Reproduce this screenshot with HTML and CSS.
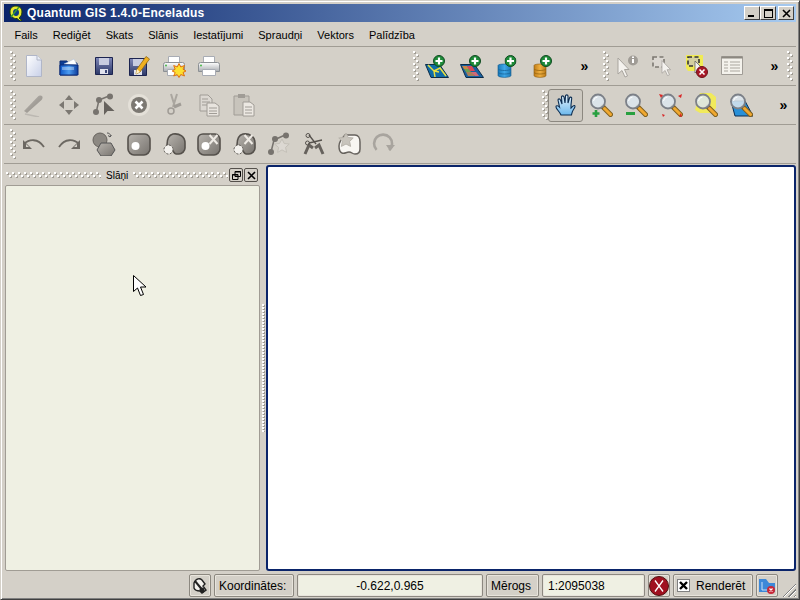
FILE: index.html
```html
<!DOCTYPE html>
<html lang="lv">
<head>
    <meta charset="UTF-8">
    <title>Quantum GIS 1.4.0-Enceladus</title>
    <link rel="stylesheet" href="styles.css">
</head>
<body>

<svg class="sprite" xmlns="http://www.w3.org/2000/svg">
    <defs>
        <linearGradient id="gPage" x1="0" y1="0" x2="1" y2="1"><stop offset="0" stop-color="#fff"/><stop offset="1" stop-color="#c8d0e8"/></linearGradient>
        <linearGradient id="gBlue" x1="0" y1="0" x2="1" y2="0"><stop offset="0" stop-color="#0f58c8"/><stop offset=".5" stop-color="#4c9cf0"/><stop offset="1" stop-color="#0c3c9c"/></linearGradient>
        <linearGradient id="gFloppy" x1="0" y1="0" x2="0" y2="1"><stop offset="0" stop-color="#8088b8"/><stop offset="1" stop-color="#2c3868"/></linearGradient>
        <linearGradient id="gPrinter" x1="0" y1="0" x2="0" y2="1"><stop offset="0" stop-color="#fff"/><stop offset="1" stop-color="#a8acb0"/></linearGradient>
        <linearGradient id="gDb" x1="0" y1="0" x2="1" y2="0"><stop offset="0" stop-color="#1878b8"/><stop offset=".5" stop-color="#40a8e8"/><stop offset="1" stop-color="#1c78b4"/></linearGradient>
        <linearGradient id="gDbO" x1="0" y1="0" x2="1" y2="0"><stop offset="0" stop-color="#c07c18"/><stop offset=".5" stop-color="#f0b040"/><stop offset="1" stop-color="#b87818"/></linearGradient>
        <linearGradient id="gGrey" x1="0" y1="0" x2="1" y2="1"><stop offset="0" stop-color="#b8b4ae"/><stop offset="1" stop-color="#77736e"/></linearGradient>
        <linearGradient id="gGlove" x1="0" y1="0" x2="0" y2="1"><stop offset="0" stop-color="#e8f4fc"/><stop offset="1" stop-color="#6cb8ec"/></linearGradient>
    </defs>

    <symbol id="i-plus" viewBox="0 0 12 12">
        <circle cx="6" cy="6" r="5.5" fill="#1d8a38" stroke="#0f4a20"/>
        <path d="M6 2.5v7M2.5 6h7" stroke="#fff" stroke-width="2.2"/>
    </symbol>
    <symbol id="i-lens" viewBox="0 0 24 24">
        <path d="M14 14l7.5 7.5" stroke="#806020" stroke-width="5" stroke-linecap="round"/>
        <path d="M15.500 15.500l6 6" stroke="#f0a830" stroke-width="3" stroke-linecap="round"/>
        <circle cx="9" cy="8.500" r="7" fill="#dce6ee" fill-opacity=".85" stroke="#7c8088" stroke-width="1.800"/>
        <path d="M4.500 8a4.500 4.500 0 0 1 4-4" stroke="#fff" fill="none"/>
    </symbol>

    <symbol id="i-new" viewBox="0 0 24 24">
        <path d="M4.500 1.500H15L19.500 6v16.500h-15z" fill="url(#gPage)" stroke="#b0b6c8"/>
        <path d="M15 1.500V6h4.500" fill="#e8ecf4" stroke="#b0b6c8"/>
    </symbol>
    <symbol id="i-open" viewBox="0 0 24 24">
        <path d="M3 7h7l1 2h9v12H3z" fill="#0c3c94" stroke="#0a2a70"/>
        <path d="M7 10l10-5 3 6z" fill="#fff" stroke="#a8b8d0" stroke-width=".5"/>
        <path d="M3 11h18v10H3z" fill="url(#gBlue)" stroke="#0a2a78"/>
        <path d="M5 13h12v3H5z" fill="#fff" fill-opacity=".35"/>
    </symbol>
    <symbol id="i-save" viewBox="0 0 24 24">
        <path d="M3.500 3.500h17v17h-17z" fill="url(#gFloppy)" stroke="#1c2450"/>
        <path d="M7 4h10v7H7z" fill="#c8cce0"/>
        <path d="M8 15h8v5H8z" fill="#e0e2ee"/>
        <path d="M13 16h2v3h-2z" fill="#3c4878"/>
    </symbol>
    <symbol id="i-saveas" viewBox="0 0 24 24">
        <path d="M2.500 4.500h17v17h-17z" fill="url(#gFloppy)" stroke="#1c2450"/>
        <path d="M6 5h10v7H6z" fill="#c8cce0"/>
        <path d="M7 16h8v5H7z" fill="#e0e2ee"/>
        <path d="M9 20l1-5L19 2.500l3.500 2.500L13 18z" fill="#f0b020" stroke="#906810" stroke-width=".8"/>
        <path d="M9 20l1-5 3 3z" fill="#fff0c8"/>
    </symbol>
    <symbol id="i-printer" viewBox="0 0 24 24">
        <path d="M6.500 2.500h11v7h-11z" fill="#fff" stroke="#a8acb4"/>
        <path d="M1.500 10.500a2 2 0 0 1 2-2h17a2 2 0 0 1 2 2v7h-21z" fill="url(#gPrinter)" stroke="#8c9094"/>
        <path d="M5.500 15.500h13v6h-13z" fill="#fff" stroke="#a8acb4"/>
        <circle cx="4" cy="11.500" r="1" fill="#48b848"/>
    </symbol>
    <symbol id="i-printnew" viewBox="0 0 24 24">
        <use href="#i-printer"/>
        <path d="M17 9.500l1.800 3.500 3.700-1.500-1.500 3.700 3 1.800-3 1.500 1.500 3.500-3.700-1.500-1.800 3-1.800-3-3.500 1.500 1.500-3.500-3-1.500 3-1.800-1.500-3.700 3.500 1.500z" fill="#fce030" stroke="#e07010"/>
    </symbol>
    <symbol id="i-addvec" viewBox="0 0 24 24">
        <path d="M0.500 10.500h14l9 13H6z" fill="#0f6ca8" stroke="#0c2c48"/>
        <path d="M3 11l6 6 1 6M9 17l6-3 6 8M9 17l5 1" fill="none" stroke="#e8e040" stroke-width="1.500"/>
        <use href="#i-plus" x="8" y="1" width="12" height="12"/>
    </symbol>
    <symbol id="i-addras" viewBox="0 0 24 24">
        <path d="M0.500 10.500h14l9 13H6z" fill="#1860a0" stroke="#0c2c48"/>
        <path d="M2 12h5l2 3H4z" fill="#c88848"/>
        <path d="M4 15h5l2 3H6z" fill="#70a050"/>
        <path d="M7 12h5l3 5-5 0z" fill="#d84858"/>
        <path d="M6 18h6l3 4H8z" fill="#a88058"/>
        <path d="M11 18h5l3 4h-4z" fill="#d06878"/>
        <use href="#i-plus" x="9" y="1" width="12" height="12"/>
    </symbol>
    <symbol id="i-adddb" viewBox="0 0 24 24">
        <path d="M3 11.500c0-2 13-2 13 0v10c0 2.500-13 2.500-13 0z" fill="url(#gDb)" stroke="#10588c" stroke-width=".6"/>
        <path d="M3 15c2 2 11 2 13 0M3 18.500c2 2 11 2 13 0" fill="none" stroke="#1a6498" stroke-width=".8"/>
        <use href="#i-plus" x="9.500" y="1" width="12" height="12"/>
    </symbol>
    <symbol id="i-addwms" viewBox="0 0 24 24">
        <path d="M4 11.500c0-2 12-2 12 0v10c0 2.500-12 2.500-12 0z" fill="url(#gDbO)" stroke="#8c5c10" stroke-width=".6"/>
        <path d="M4 15c2 2 10 2 12 0M4 18.500c2 2 10 2 12 0" fill="none" stroke="#946410" stroke-width=".8"/>
        <use href="#i-plus" x="10" y="1" width="12" height="12"/>
    </symbol>
    <symbol id="i-arrow" viewBox="0 0 24 24">
        <path d="M5 2v16l4-3.500 3 6.500 2.500-1-3-6.500H16z" fill="#f4f2ee" stroke="#a8a49e"/>
    </symbol>
    <symbol id="i-identify" viewBox="0 0 24 24">
        <use href="#i-arrow" x="-2" y="2" width="24" height="24"/>
        <circle cx="18" cy="6.500" r="5" fill="#a09c96"/>
        <path d="M17 5h2v4h-2zM17 2.500h2v1.500h-2z" fill="#fff"/>
    </symbol>
    <symbol id="i-select" viewBox="0 0 24 24">
        <path d="M3 3h11v10H3z" fill="#dcd8d2" stroke="#7c7872" stroke-width="1.600" stroke-dasharray="4 2.500"/>
        <use href="#i-arrow" x="8" y="5" width="19" height="19"/>
    </symbol>
    <symbol id="i-deselect" viewBox="0 0 24 24">
        <path d="M1 1h17v13l-4 3H3l-2-3z" fill="#f4f040" opacity=".85"/>
        <path d="M3 3h11v9H3z" fill="#d4d0a0" stroke="#333" stroke-width="1.600" stroke-dasharray="4 2.500"/>
        <path d="M10 7v12l3-3 2 4 2-1-2-4h3z" fill="#f4f2ee" stroke="#555" stroke-width=".7"/>
        <circle cx="17" cy="18" r="5.500" fill="#a81828" stroke="#701018"/>
        <path d="M14.500 15.500l5 5M19.500 15.500l-5 5" stroke="#fff" stroke-width="1.600"/>
    </symbol>
    <symbol id="i-table" viewBox="0 0 24 24">
        <path d="M1.500 2.500h21v18h-21z" fill="#f4f2ec" stroke="#a09c96"/>
        <path d="M1.500 2.500h21v2h-21z" fill="#8c8880"/>
        <path d="M4 8h4M10 8h10M4 11h4M10 11h10M4 14h4M10 14h10M4 17h4M10 17h10" stroke="#aaa69e"/>
    </symbol>

    <symbol id="i-edit" viewBox="0 0 24 24">
        <path d="M2 18L16 3.500c1-1 3-1.500 4-.5s.5 3-.5 4L5 20z" fill="url(#gGrey)" opacity=".8"/>
        <path d="M3 21l14 3" stroke="#bcb8b2" stroke-width="1.500"/>
    </symbol>
    <symbol id="i-move" viewBox="0 0 24 24">
        <path d="M12 2l4 5H8zM12 22l-4-5h8zM2 12l5-4v8zM22 12l-5 4V8z" fill="#7c7872"/>
    </symbol>
    <symbol id="i-nodes" viewBox="0 0 24 24">
        <path d="M7 7l-3 13 M7 7l10-4" stroke="#77736e" stroke-width="1.500"/>
        <circle cx="7" cy="7" r="3" fill="#77736e"/>
        <circle cx="18" cy="3.500" r="3" fill="#77736e"/>
        <circle cx="4" cy="19" r="3" fill="#77736e"/>
        <path d="M12 8v14l3.500-4 7 0z" fill="#66625d"/>
    </symbol>
    <symbol id="i-delete" viewBox="0 0 24 24">
        <circle cx="12" cy="12" r="11" fill="#e4e0d8"/>
        <circle cx="12" cy="12" r="8" fill="#7c7872"/>
        <path d="M8.500 8.500l7 7M15.500 8.500l-7 7" stroke="#fff" stroke-width="2.600"/>
    </symbol>
    <symbol id="i-cut" viewBox="0 0 24 24">
        <path d="M9 1l4 13M15 1l-4 13" stroke="#aaa69f" stroke-width="2"/>
        <circle cx="9" cy="18" r="3" fill="none" stroke="#a09c96" stroke-width="1.500"/>
        <path d="M12 14l7-3" stroke="#a09c96" stroke-width="3"/>
    </symbol>
    <symbol id="i-copy" viewBox="0 0 24 24">
        <path d="M3 2h8l4 4v12H3z" fill="#dcd8d2" stroke="#a09c96"/>
        <path d="M5 6h6M5 9h8M5 12h8" stroke="#a09c96"/>
        <path d="M10 10h8l4 3v10H10z" fill="#e8e4de" stroke="#a09c96"/>
        <path d="M12 15h8M12 18h8M12 20.500h8" stroke="#a09c96"/>
    </symbol>
    <symbol id="i-paste" viewBox="0 0 24 24">
        <path d="M2 3h15v19H2z" fill="#c8c4bc" stroke="#a09c96"/>
        <path d="M6 1h7v4H6z" fill="#a09c96"/>
        <path d="M11 9h7l4 3v11H11z" fill="#ecE8e2" stroke="#a09c96"/>
        <path d="M13 14h7M13 17h7M13 20h7" stroke="#a09c96"/>
    </symbol>

    <symbol id="i-undo" viewBox="0 0 24 24">
        <path d="M2 12c5-5 14-6 20 3" fill="none" stroke="#6c6862" stroke-width="1.800"/>
        <path d="M1 8v9h9z" fill="#6c6862"/>
        <path d="M4 12v3h3z" fill="#d4d0c8"/>
    </symbol>
    <symbol id="i-redo" viewBox="0 0 24 24">
        <path d="M22 12c-5-5-14-6-20 3" fill="none" stroke="#6c6862" stroke-width="1.800"/>
        <path d="M23 8v9h-9z" fill="#6c6862"/>
        <path d="M20 12v3h-3z" fill="#d4d0c8"/>
    </symbol>
    <symbol id="i-capture" viewBox="0 0 24 24">
        <circle cx="8" cy="8" r="7" fill="#8c8882" stroke="#66625d"/>
        <path d="M9 11h10l4 7-4 6H9l-4-6z" fill="url(#gGrey)" stroke="#555"/>
        <path d="M15 1c3 0 4 2 3 4M18 5l-2-1.500M18 5l1.500-2" fill="none" stroke="#555"/>
    </symbol>
    <symbol id="i-ring" viewBox="0 0 24 24">
        <path d="M6 2h12c3 0 5 3 5 6v9c0 3-3 6-6 6H7c-3 0-6-3-6-6V7c0-3 2-5 5-5z" fill="url(#gGrey)" stroke="#55514c" stroke-width="1.600"/>
        <circle cx="8.500" cy="14" r="4" fill="#fff"/>
    </symbol>
    <symbol id="i-part" viewBox="0 0 24 24">
        <path d="M11 2c7-1 12 3 12 9v5c0 3-3 6-6 6h-3c-2 0-3-4-5-5s-4-1-4-4c0-6 2-10 6-11z" fill="url(#gGrey)" stroke="#55514c" stroke-width="1.600"/>
        <circle cx="6.500" cy="17.500" r="4.500" fill="#f4f2ee" stroke="#55514c" stroke-dasharray="2 1.500"/>
    </symbol>
    <symbol id="i-ringdel" viewBox="0 0 24 24">
        <use href="#i-ring"/>
        <path d="M12.500 3l8 9M20.500 3l-8 9" stroke="#eeeae4" stroke-width="2"/>
    </symbol>
    <symbol id="i-partdel" viewBox="0 0 24 24">
        <use href="#i-part"/>
        <path d="M12.500 3l8 9M20.500 3l-8 9" stroke="#eeeae4" stroke-width="2"/>
    </symbol>
    <symbol id="i-nodestar" viewBox="0 0 24 24">
        <path d="M7 8l-3 12M7 8l11-5" stroke="#77736e" stroke-width="1.500"/>
        <circle cx="8" cy="7" r="3" fill="#77736e"/>
        <circle cx="19" cy="3.500" r="3" fill="#77736e"/>
        <circle cx="4" cy="20" r="3" fill="#77736e"/>
        <path d="M15 7l2.200 4.500 5 .5-3.600 3.400 1 5-4.600-2.500-4.400 2.500 1-5L7.500 12l5-.5z" fill="#dcd8d2" stroke="#c4c0b8"/>
    </symbol>
    <symbol id="i-split" viewBox="0 0 24 24">
        <path d="M3 22l4-9 4 3M21 22l-4-9-4 3" fill="none" stroke="#66625d" stroke-width="3"/>
        <path d="M7 3l7 9M7 11l13-3" stroke="#55514c" stroke-width="1.300"/>
        <circle cx="6" cy="3.500" r="2" fill="none" stroke="#55514c"/>
        <circle cx="5.500" cy="11" r="2" fill="none" stroke="#55514c"/>
    </symbol>
    <symbol id="i-merge" viewBox="0 0 24 24">
        <path d="M8 3h10c3 0 5 3 5 7v7c0 3-2 5-5 5-3 0-3-2-6-2s-4 2-7 1-3-4-3-7 1-4 2-6z" fill="#f8f6f2" stroke="#66625d" stroke-width="1.500"/>
        <path d="M9 1l2.200 4.500 5 .5-3.600 3.400 1 5L9 12l-4.600 2.400 1-5L1.800 6l5-.5z" fill="#c8c4bc" stroke="#b8b4ac"/>
    </symbol>
    <symbol id="i-rotate" viewBox="0 0 24 24">
        <path d="M19 16a9 9 0 1 0-12 4" fill="none" stroke="#a8a49e" stroke-width="2.600" transform="rotate(20 12 12)"/>
        <path d="M14 13h9l-5 6z" fill="#a8a49e"/>
    </symbol>

    <symbol id="i-hand" viewBox="0 0 24 24">
        <path d="M7 22c-1-3-5-6-5-8s2-1.500 3.500 0L4 7c0-1.500 2-1.500 2.500 0L8 11 7.500 4c0-1.500 2-1.500 2.500 0l1 6 .5-7c0-1.500 2.500-1.500 2.500 0v7l1.500-5c.5-1.500 2.500-1 2.200.5L17 12v3c1-1 2.500-3 3.500-2.500s.5 2-1 4-1.500 3.500-2 5.500z" fill="url(#gGlove)" stroke="#0c2c50" stroke-width="1.100"/>
    </symbol>
    <symbol id="i-zoomin" viewBox="0 0 24 24">
        <use href="#i-lens"/>
        <path d="M7 17v7M3.500 20.500h7" stroke="#28a040" stroke-width="2.600"/>
    </symbol>
    <symbol id="i-zoomout" viewBox="0 0 24 24">
        <use href="#i-lens"/>
        <path d="M2 20.500h9" stroke="#28a040" stroke-width="3"/>
    </symbol>
    <symbol id="i-zoomfull" viewBox="0 0 24 24">
        <use href="#i-lens"/>
        <path d="M0 1l4 1-2 3zM23 1l-1 4-3-2zM3 21l3 1-2 2zM22 20l1 4-3-1z" fill="#d82828"/>
    </symbol>
    <symbol id="i-zoomlayer" viewBox="0 0 24 24">
        <path d="M6 0h11l5 4v11l-5 5H6l-5-3z" fill="#f8f040" opacity=".8"/>
        <use href="#i-lens"/>
    </symbol>
    <symbol id="i-zoomlast" viewBox="0 0 24 24">
        <path d="M2 8h14l8 15H6z" fill="#2890d8" stroke="#0c2c50"/>
        <use href="#i-lens"/>
    </symbol>

    <symbol id="i-stopmark" viewBox="0 0 18 18">
        <path d="M3 6c2-5 6-5 8-3l3 4-2 2 3 4-4 3-2-2c-2 0-5 0-6-3z" fill="#f4f2ee" stroke="#222" stroke-width="1.400"/>
        <path d="M4 4l9 11" stroke="#222" stroke-width="2"/>
        <circle cx="11" cy="13" r="2.500" fill="#222"/>
    </symbol>
    <symbol id="i-proj" viewBox="0 0 18 18">
        <path d="M1 2h7l3 4h6v9H1z" fill="#3c88d8"/>
        <path d="M4 5v8h9" fill="none" stroke="#c8e0f8"/>
        <circle cx="13" cy="13" r="4" fill="#c82838"/>
        <path d="M11.500 11.500l3 3M14.500 11.500l-3 3" stroke="#fff" stroke-width="1.200"/>
    </symbol>
</svg>

<div class="window">
    <div class="titlebar">
        <svg class="logo" viewBox="0 0 16 16" width="16" height="16">
            <path d="M8 1c3.500 0 6 2.500 6 6s-2 5-3 6l3 2.500-2 .5-3-2.500C5 14 2 11 2 7s2.500-6 6-6z" fill="#e8e830" stroke="#1c3c0c"/>
            <path d="M8 4c-2 0-3 1.500-3 3.500S6 11 8 11s3-1.500 3-3.500S10 4 8 4z" fill="#0c3c84"/>
            <path d="M3 12L11 2" stroke="#3c9c2c" stroke-width="1.400"/>
        </svg>
        <span class="title-text">Quantum GIS 1.4.0-Enceladus</span>
        <div class="caption-btns">
            <span class="caption-btn"><i class="cap-min"></i></span>
            <span class="caption-btn"><i class="cap-max"></i></span>
            <span class="caption-btn close"><svg viewBox="0 0 9 9" width="9" height="9"><path d="M1 1l7 7M8 1L1 8" stroke="#000" stroke-width="1.600"/></svg></span>
        </div>
    </div>

    <div class="menubar">
        <span>Fails</span>
        <span>Rediģēt</span>
        <span>Skats</span>
        <span>Slānis</span>
        <span>Iestatījumi</span>
        <span>Spraudņi</span>
        <span>Vektors</span>
        <span>Palīdzība</span>
    </div>

    <!-- rinda 1 -->
    <div class="toolbar">
        <div class="tgroup file-group">
            <i class="grip"></i>
            <span class="tool"><svg class="ic"><use href="#i-new"/></svg></span>
            <span class="tool"><svg class="ic"><use href="#i-open"/></svg></span>
            <span class="tool"><svg class="ic"><use href="#i-save"/></svg></span>
            <span class="tool"><svg class="ic"><use href="#i-saveas"/></svg></span>
            <span class="tool"><svg class="ic"><use href="#i-printnew"/></svg></span>
            <span class="tool"><svg class="ic"><use href="#i-printer"/></svg></span>
        </div>
        <div class="tgroup layer-group">
            <i class="grip"></i>
            <span class="tool"><svg class="ic"><use href="#i-addvec"/></svg></span>
            <span class="tool"><svg class="ic"><use href="#i-addras"/></svg></span>
            <span class="tool"><svg class="ic"><use href="#i-adddb"/></svg></span>
            <span class="tool"><svg class="ic"><use href="#i-addwms"/></svg></span>
            <span class="more">»</span>
        </div>
        <div class="tgroup attr-group">
            <i class="grip"></i>
            <span class="tool"><svg class="ic"><use href="#i-identify"/></svg></span>
            <span class="tool"><svg class="ic"><use href="#i-select"/></svg></span>
            <span class="tool"><svg class="ic"><use href="#i-deselect"/></svg></span>
            <span class="tool"><svg class="ic"><use href="#i-table"/></svg></span>
            <span class="more">»</span>
        </div>
        <i class="grip"></i>
    </div>

    <!-- rinda 2 -->
    <div class="toolbar">
        <div class="tgroup edit-group">
            <i class="grip"></i>
            <span class="tool"><svg class="ic"><use href="#i-edit"/></svg></span>
            <span class="tool"><svg class="ic"><use href="#i-move"/></svg></span>
            <span class="tool"><svg class="ic"><use href="#i-nodes"/></svg></span>
            <span class="tool"><svg class="ic"><use href="#i-delete"/></svg></span>
            <span class="tool"><svg class="ic"><use href="#i-cut"/></svg></span>
            <span class="tool"><svg class="ic"><use href="#i-copy"/></svg></span>
            <span class="tool"><svg class="ic"><use href="#i-paste"/></svg></span>
        </div>
        <div class="tgroup nav-group">
            <i class="grip"></i>
            <span class="tool active"><svg class="ic"><use href="#i-hand"/></svg></span>
            <span class="tool"><svg class="ic"><use href="#i-zoomin"/></svg></span>
            <span class="tool"><svg class="ic"><use href="#i-zoomout"/></svg></span>
            <span class="tool"><svg class="ic"><use href="#i-zoomfull"/></svg></span>
            <span class="tool"><svg class="ic"><use href="#i-zoomlayer"/></svg></span>
            <span class="tool"><svg class="ic"><use href="#i-zoomlast"/></svg></span>
            <span class="more">»</span>
        </div>
    </div>

    <!-- rinda 3 -->
    <div class="toolbar">
        <div class="tgroup">
            <i class="grip"></i>
            <span class="tool"><svg class="ic"><use href="#i-undo"/></svg></span>
            <span class="tool"><svg class="ic"><use href="#i-redo"/></svg></span>
            <span class="tool"><svg class="ic"><use href="#i-capture"/></svg></span>
            <span class="tool"><svg class="ic"><use href="#i-ring"/></svg></span>
            <span class="tool"><svg class="ic"><use href="#i-part"/></svg></span>
            <span class="tool"><svg class="ic"><use href="#i-ringdel"/></svg></span>
            <span class="tool"><svg class="ic"><use href="#i-partdel"/></svg></span>
            <span class="tool"><svg class="ic"><use href="#i-nodestar"/></svg></span>
            <span class="tool"><svg class="ic"><use href="#i-split"/></svg></span>
            <span class="tool"><svg class="ic"><use href="#i-merge"/></svg></span>
            <span class="tool"><svg class="ic"><use href="#i-rotate"/></svg></span>
        </div>
    </div>

    <div class="main">
        <div class="dock">
            <div class="dock-title">
                <i class="dock-grip"></i>
                <span>Slāņi</span>
                <i class="dock-grip"></i>
                <span class="dock-btn"><svg viewBox="0 0 9 9" width="9" height="9"><path d="M3 .5h5.500v5H3zM.5 3.500H6v5H.5z" fill="#d4d0c8" stroke="#000"/><path d="M3 1h6M0 4h6" stroke="#000"/></svg></span>
                <span class="dock-btn"><svg viewBox="0 0 9 9" width="9" height="9"><path d="M1 1l7 7M8 1L1 8" stroke="#000" stroke-width="1.600"/></svg></span>
            </div>
            <div class="layer-list"></div>
        </div>
        <div class="splitter"><i></i></div>
        <div class="map"></div>
    </div>

    <div class="statusbar">
        <span class="st-btn"><svg viewBox="0 0 18 18" width="18" height="18"><use href="#i-stopmark"/></svg></span>
        <span class="st-label coord-label">Koordinātes:</span>
        <span class="st-input coord-input">-0.622,0.965</span>
        <span class="st-label scale-label">Mērogs</span>
        <span class="st-input scale-input">1:2095038</span>
        <span class="st-btn stop-btn"><svg viewBox="0 0 20 20" width="20" height="20"><circle cx="10" cy="10" r="9.500" fill="#a01020" stroke="#501010"/><path d="M6 4.500l8 11M14 4.500l-8 11" stroke="#fff" stroke-width="1.300"/></svg></span>
        <span class="st-label render-box"><i class="check"><svg viewBox="0 0 9 9" width="9" height="9"><path d="M1 1l7 7M8 1L1 8" stroke="#000" stroke-width="2.400"/></svg></i>Renderēt</span>
        <span class="st-btn proj-btn"><svg viewBox="0 0 18 18" width="18" height="18"><use href="#i-proj"/></svg></span>
        <span class="size-grip"></span>
    </div>

    <svg class="cursor" viewBox="0 0 14 22" width="14" height="22">
        <path d="M.5.500v16l4-3.500 3 7.500 3-1-3-7.500h5.500z" fill="#fff" stroke="#000"/>
    </svg>
</div>

</body>
</html>
```

FILE: styles.css
```css
html, body {
    margin: 0;
    padding: 0;
}

body {
    width: 800px;
    height: 600px;
    overflow: hidden;
    font-family: "Liberation Sans", Arial, sans-serif;
    background-color: #d4d0c8;
    color: #000;
}

.sprite {
    display: block;
    width: 0;
    height: 0;
}

.window {
    position: relative;
    box-sizing: border-box;
    width: 800px;
    height: 600px;
    padding: 3px 3px 2px 3px;
    background-color: #d4d0c8;
    border: 1px solid;
    border-color: #d4d0c8 #404040 #404040 #d4d0c8;
    box-shadow: inset 1px 1px 0 #fff, inset -1px -1px 0 #808080;
    display: flex;
    flex-direction: column;
}

/* title bar */
.titlebar {
    height: 18px;
    flex: none;
    margin-bottom: 2px;
    display: flex;
    align-items: center;
    padding: 0 2px 0 4px;
    background: linear-gradient(to right, #0a246a, #a6caf0);
    color: #fff;
}

.logo {
    margin-right: 3px;
}

.title-text {
    font-size: 12px;
    font-weight: bold;
    letter-spacing: 0.25px;
}

.caption-btns {
    margin-left: auto;
    display: flex;
}

.caption-btn {
    box-sizing: border-box;
    width: 16px;
    height: 14px;
    background-color: #d4d0c8;
    border: 1px solid;
    border-color: #fff #404040 #404040 #fff;
    display: flex;
    align-items: center;
    justify-content: center;
}

.caption-btn.close {
    margin-left: 2px;
}

.cap-min {
    width: 6px;
    height: 2px;
    background-color: #000;
    margin-top: 6px;
    margin-right: 2px;
}

.cap-max {
    box-sizing: border-box;
    width: 9px;
    height: 9px;
    border: 1px solid #000;
    border-top-width: 2px;
}

/* menu */
.menubar {
    height: 22px;
    flex: none;
    display: flex;
    align-items: center;
    padding-left: 3px;
    font-size: 11px;
    border-bottom: 1px solid #a09c94;
}

.menubar span {
    padding: 0 7.5px;
}

/* toolbars */
.toolbar {
    box-sizing: border-box;
    height: 39px;
    flex: none;
    display: flex;
    align-items: center;
    padding-left: 6px;
    border-bottom: 1px solid #a09c94;
}

.tgroup {
    display: flex;
    align-items: center;
}

.file-group {
    width: 403px;
}

.layer-group {
    width: 190px;
}

.attr-group {
    width: 184px;
}

.edit-group {
    width: 540px;
}

.grip {
    width: 6px;
    height: 30px;
    flex: none;
    background-image:
        radial-gradient(circle at 1px 1px, #fff 1px, transparent 1.1px),
        radial-gradient(circle at 4px 4px, #fff 1px, transparent 1.1px),
        radial-gradient(circle at 2px 2px, #a09c94 1px, transparent 1.1px),
        radial-gradient(circle at 5px 5px, #a09c94 1px, transparent 1.1px);
    background-size: 6px 6px;
}

.tool {
    box-sizing: border-box;
    width: 35px;
    height: 33px;
    flex: none;
    display: flex;
    align-items: center;
    justify-content: center;
}

.tool.active {
    background-color: #cdc9c1;
    border: 1px solid #8c8880;
    border-radius: 3px;
}

.ic {
    width: 24px;
    height: 24px;
}

.more {
    width: 25px;
    margin-left: 13px;
    text-align: center;
    font-size: 14px;
    font-weight: bold;
}

/* main area */
.main {
    flex: 1;
    min-height: 0;
    display: flex;
    padding-top: 1px;
}

.dock {
    width: 256px;
    flex: none;
    display: flex;
    flex-direction: column;
}

.dock-title {
    height: 20px;
    flex: none;
    display: flex;
    align-items: center;
    padding-left: 2px;
    font-size: 10px;
}

.dock-title span:first-of-type {
    padding: 0 5px;
}

.dock-grip {
    width: 95px;
    height: 6px;
    flex: none;
    background-image:
        radial-gradient(circle at 1px 1px, #fff 1px, transparent 1.1px),
        radial-gradient(circle at 4px 4px, #fff 1px, transparent 1.1px),
        radial-gradient(circle at 2px 2px, #a09c94 1px, transparent 1.1px),
        radial-gradient(circle at 5px 5px, #a09c94 1px, transparent 1.1px);
    background-size: 6px 6px;
}

.dock-title .dock-btn {
    box-sizing: border-box;
    width: 14px;
    height: 14px;
    margin-left: 1px;
    padding: 0;
    border: 1px solid #55514c;
    border-radius: 2px;
    display: flex;
    align-items: center;
    justify-content: center;
}

.layer-list {
    flex: 1;
    margin-left: 1px;
    background-color: #eff0e3;
    border: 1px solid #a09c94;
    border-radius: 2px;
}

.splitter {
    width: 6px;
    flex: none;
    display: flex;
    align-items: center;
    justify-content: center;
}

.splitter i {
    width: 3px;
    height: 128px;
    background-image: radial-gradient(circle at 1px 1px, #fff 1px, transparent 1.1px),
        radial-gradient(circle at 2px 2px, #a09c94 1px, transparent 1.1px);
    background-size: 3px 3px;
}

.map {
    flex: 1;
    background-color: #fff;
    border: 2px solid #0a246a;
    border-radius: 3px;
}

/* status bar */
.statusbar {
    height: 23px;
    flex: none;
    margin-top: 3px;
    display: flex;
    align-items: stretch;
    padding-left: 185px;
    font-size: 12px;
}

.st-btn,
.st-label,
.st-input {
    box-sizing: border-box;
    border: 1px solid #8c8880;
    border-radius: 2px;
    box-shadow: inset 0 0 0 1px #e8e4dc;
    display: flex;
    align-items: center;
    margin-right: 3px;
    flex: none;
}

.st-btn {
    justify-content: center;
    width: 22px;
}

.coord-label {
    width: 80px;
    padding-left: 4px;
    margin-right: 3px;
}

.coord-input {
    width: 186px;
    justify-content: center;
    background-color: #eff0e3;
}

.scale-label {
    width: 53px;
    padding-left: 4px;
}

.scale-input {
    width: 103px;
    padding-left: 5px;
    background-color: #eff0e3;
}

.render-box {
    width: 80px;
    padding-left: 3px;
}

.check {
    box-sizing: border-box;
    width: 13px;
    height: 13px;
    margin-right: 6px;
    background-color: #fff;
    border: 1px solid #808080;
    display: flex;
    align-items: center;
    justify-content: center;
}

.size-grip {
    width: 14px;
    height: 14px;
    align-self: flex-end;
    margin-left: auto;
    background: repeating-linear-gradient(135deg, transparent 0 2px, #808080 2px 3px, #fff 3px 4px);
    clip-path: polygon(100% 0, 100% 100%, 0 100%);
}

/* mouse pointer over the layer list */
.cursor {
    position: absolute;
    left: 132px;
    top: 274px;
}
```
